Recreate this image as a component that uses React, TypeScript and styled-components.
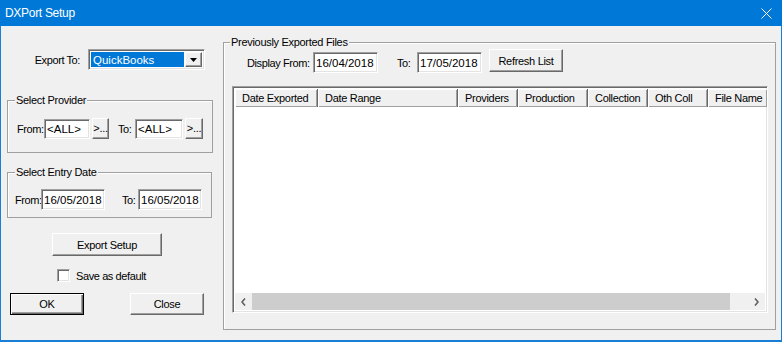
import React from 'react';
import styled, { createGlobalStyle, css } from 'styled-components';

const GlobalStyle = createGlobalStyle`
  body {
    margin: 0;
    background: #f0f0f0;
    font-family: "Liberation Sans", Arial, sans-serif;
    font-size: 11px;
    color: #000;
  }
  * { box-sizing: border-box; }
`;

const raised = css`
  background: #f0f0f0;
  border: 1px solid;
  border-color: #ffffff #696969 #696969 #ffffff;
  box-shadow: inset -1px -1px 0 #a0a0a0;
`;

const sunken = css`
  background: #ffffff;
  border: 1px solid;
  border-color: #a0a0a0 #ffffff #ffffff #a0a0a0;
  box-shadow: inset 1px 1px 0 #696969, inset -1px -1px 0 #e3e3e3;
`;

const Window = styled.div`
  width: 782px;
  height: 342px;
  border: 1px solid #1a7fd4;
  border-top: 0;
  border-bottom-width: 2px;
  background: #f0f0f0;
  display: flex;
  flex-direction: column;
`;

const TitleBar = styled.div`
  height: 26px;
  flex: none;
  margin: 0 -1px;
  padding: 0 10px 0 5px;
  background: #0078d7;
  color: #fff;
  display: flex;
  align-items: center;
  justify-content: space-between;
  font-size: 12px;
  letter-spacing: -0.3px;
`;

const Body = styled.div`
  display: flex;
  flex: 1;
`;

const LeftColumn = styled.div`
  width: 206px;
  margin-left: 6px;
  display: flex;
  flex-direction: column;
`;

const Label = styled.span<{ $w: number; $right?: boolean }>`
  width: ${(p) => p.$w}px;
  flex: none;
  letter-spacing: -0.4px;
  text-align: ${(p) => (p.$right ? 'right' : 'left')};
  white-space: nowrap;
`;

const ExportRow = styled.div`
  margin-top: 23px;
  display: flex;
  align-items: center;
  gap: 8px;
  height: 21px;
`;

const Combo = styled.div`
  ${sunken};
  width: 117px;
  height: 21px;
  display: flex;
  padding: 2px;
  gap: 1px;
`;

const ComboValue = styled.div`
  flex: 1;
  background: #0078d7;
  color: #fff;
  padding-left: 2px;
  line-height: 16px;
  font-size: 11.5px;
`;

const ComboButton = styled.div`
  ${raised};
  width: 17px;
  display: flex;
  align-items: center;
  justify-content: center;
`;

const Group = styled.fieldset<{ $top: number; $w: number }>`
  margin: ${(p) => p.$top}px 0 0;
  padding: 0;
  min-width: 0;
  width: ${(p) => p.$w}px;
  border: 1px solid #a0a0a0;
  box-shadow: inset 1px 1px 0 #fff;
`;

const Legend = styled.legend<{ $indent: number }>`
  margin-left: ${(p) => p.$indent}px;
  padding: 0 1px;
  line-height: 13px;
  background: #f0f0f0;
  letter-spacing: -0.3px;
`;

const FieldRow = styled.div<{ $m: string }>`
  display: flex;
  align-items: center;
  margin: ${(p) => p.$m};
`;

const Field = styled.div<{ $w: number; $h?: number }>`
  ${sunken};
  width: ${(p) => p.$w}px;
  height: ${(p) => p.$h ?? 21}px;
  flex: none;
  padding-left: 2px;
  display: flex;
  align-items: center;
  font-size: 11.5px;
  white-space: nowrap;
  overflow: hidden;
`;

const Button = styled.div<{ $w: number; $h: number; $default?: boolean }>`
  ${raised};
  width: ${(p) => p.$w}px;
  height: ${(p) => p.$h}px;
  flex: none;
  display: flex;
  align-items: center;
  justify-content: center;
  letter-spacing: -0.3px;
  ${(p) =>
    p.$default &&
    css`
      border: 1px solid #000;
      box-shadow: inset 1px 1px 0 #fff, inset -1px -1px 0 #696969, inset -2px -2px 0 #a0a0a0;
    `}
`;

const Browse = styled(Button)`
  padding-bottom: 2px;
`;

const Spaced = styled.div<{ $ml: number; $mt?: number }>`
  margin-left: ${(p) => p.$ml}px;
  margin-top: ${(p) => p.$mt ?? 0}px;
  display: flex;
  align-items: center;
`;

const CheckBox = styled.div`
  ${sunken};
  width: 13px;
  height: 13px;
  margin-right: 6px;
`;

const RightGroup = styled(Group)`
  margin-left: 10px;
  align-self: flex-start;
`;

const DisplayRow = styled.div`
  display: flex;
  align-items: flex-start;
  margin-left: 23px;
  height: 24px;
`;

const ListView = styled.div`
  ${sunken};
  margin: 13px 6px 16px 8px;
  width: 536px;
  height: 227px;
  padding: 2px;
  display: flex;
  flex-direction: column;
  overflow: hidden;
`;

const Header = styled.div`
  display: flex;
  height: 18px;
  flex: none;
`;

const HeaderCell = styled.div<{ $w: number }>`
  width: ${(p) => p.$w}px;
  flex: none;
  background: #f0f0f0;
  border-right: 1px solid #696969;
  box-shadow: inset 1px 1px 0 #fff, inset -1px -1px 0 #a0a0a0;
  padding-left: 7px;
  display: flex;
  align-items: center;
  letter-spacing: -0.3px;
  white-space: nowrap;
  overflow: hidden;
`;

const ListBody = styled.div`
  flex: 1;
  background: #fff;
`;

const ScrollBar = styled.div`
  height: 17px;
  flex: none;
  display: flex;
  background: #f0f0f0;
`;

const ScrollArrow = styled.div`
  width: 17px;
  flex: none;
  display: flex;
  align-items: center;
  justify-content: center;
`;

const Thumb = styled.div`
  width: 478px;
  background: #cdcdcd;
`;

const Track = styled.div`
  flex: 1;
`;

const columns: [string, number][] = [
  ['Date Exported', 83],
  ['Date Range', 140],
  ['Providers', 60],
  ['Production', 70],
  ['Collection', 60],
  ['Oth Coll', 60],
  ['File Name', 60],
];

const Chevron = ({ left }: { left?: boolean }) => (
  <svg width="5" height="8" viewBox="0 0 5 8">
    <path
      d={left ? 'M4 0.5 L1 4 L4 7.5' : 'M1 0.5 L4 4 L1 7.5'}
      fill="none"
      stroke="#606060"
      strokeWidth="1.6"
    />
  </svg>
);

export default function App() {
  return (
    <>
      <GlobalStyle />
      <Window>
        <TitleBar>
          <span>DXPort Setup</span>
          <svg width="11" height="11" viewBox="0 0 11 11">
            <path d="M0.5 0.5 L10.5 10.5 M10.5 0.5 L0.5 10.5" stroke="#fff" strokeWidth="1" />
          </svg>
        </TitleBar>
        <Body>
          <LeftColumn>
            <ExportRow>
              <Label $w={73} $right>Export To:</Label>
              <Combo>
                <ComboValue>QuickBooks</ComboValue>
                <ComboButton>
                  <svg width="7" height="4" viewBox="0 0 7 4">
                    <path d="M0 0 H7 L3.5 4 Z" fill="#000" />
                  </svg>
                </ComboButton>
              </Combo>
            </ExportRow>

            <Group $top={24} $w={206}>
              <Legend $indent={7}>Select Provider</Legend>
              <FieldRow $m="11px 0 13px 9px">
                <Label $w={27}>From:</Label>
                <Field $w={46} $h={20}>&lt;ALL&gt;</Field>
                <Spaced $ml={2}>
                  <Browse $w={17} $h={21}>&gt;...</Browse>
                </Spaced>
                <Spaced $ml={9}>
                  <Label $w={17}>To:</Label>
                  <Field $w={48} $h={20}>&lt;ALL&gt;</Field>
                </Spaced>
                <Spaced $ml={2}>
                  <Browse $w={18} $h={21}>&gt;...</Browse>
                </Spaced>
              </FieldRow>
            </Group>

            <Group $top={13} $w={205}>
              <Legend $indent={7}>Select Entry Date</Legend>
              <FieldRow $m="10px 0 7px 7px">
                <Label $w={26}>From:</Label>
                <Field $w={64}>16/05/2018</Field>
                <Spaced $ml={17}>
                  <Label $w={16}>To:</Label>
                  <Field $w={64}>16/05/2018</Field>
                </Spaced>
              </FieldRow>
            </Group>

            <Spaced $ml={45} $mt={15}>
              <Button $w={110} $h={23}>Export Setup</Button>
            </Spaced>

            <Spaced $ml={50} $mt={13}>
              <CheckBox />
              <Label $w={90}>Save as default</Label>
            </Spaced>

            <Spaced $ml={3} $mt={11}>
              <Button $w={74} $h={22} $default>OK</Button>
              <Spaced $ml={46}>
                <Button $w={74} $h={22}>Close</Button>
              </Spaced>
            </Spaced>
          </LeftColumn>

          <RightGroup $top={10} $w={553}>
            <Legend $indent={6}>Previously Exported Files</Legend>
            <DisplayRow>
              <Spaced $ml={0} $mt={3}>
                <Label $w={66}>Display From:</Label>
                <Field $w={65}>16/04/2018</Field>
              </Spaced>
              <Spaced $ml={19} $mt={3}>
                <Label $w={20}>To:</Label>
                <Field $w={65}>17/05/2018</Field>
              </Spaced>
              <Spaced $ml={7}>
                <Button $w={74} $h={23}>Refresh List</Button>
              </Spaced>
            </DisplayRow>
            <ListView>
              <Header>
                {columns.map(([name, w]) => (
                  <HeaderCell key={name} $w={w}>{name}</HeaderCell>
                ))}
              </Header>
              <ListBody />
              <ScrollBar>
                <ScrollArrow><Chevron left /></ScrollArrow>
                <Thumb />
                <Track />
                <ScrollArrow><Chevron /></ScrollArrow>
              </ScrollBar>
            </ListView>
          </RightGroup>
        </Body>
      </Window>
    </>
  );
}
